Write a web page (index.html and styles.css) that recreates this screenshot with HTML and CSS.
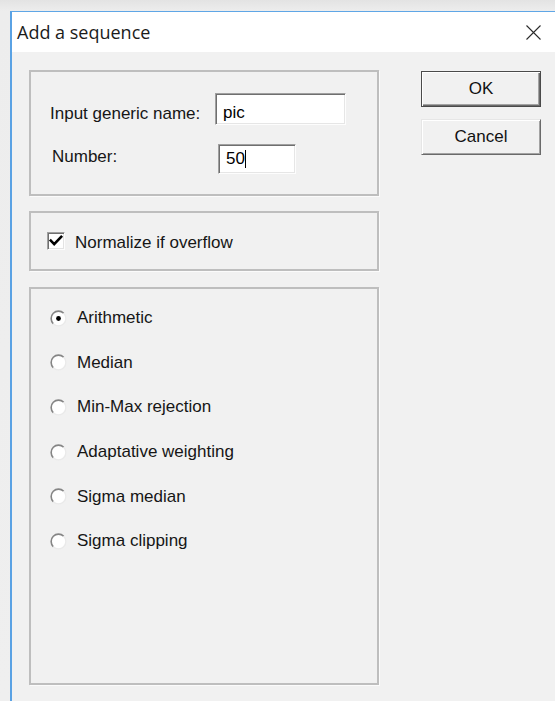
FILE: index.html
```html
<!DOCTYPE html>
<html lang="en">
<head>
<meta charset="utf-8">
<title>Add a sequence</title>
<link rel="stylesheet" href="styles.css">
</head>
<body>
<div class="window">
  <div class="titlebar">
    <span class="title">Add a sequence</span>
    <svg class="close" width="15" height="15" viewBox="0 0 15 15" aria-hidden="true">
      <path d="M0.5 0.5L14.5 14.5M14.5 0.5L0.5 14.5" />
    </svg>
  </div>

  <div class="client">
    <div class="panels">
      <div class="group names">
        <div class="field-row first">
          <span class="label">Input generic name:</span>
          <div class="edit wide">pic</div>
        </div>
        <div class="field-row second">
          <span class="label">Number:</span>
          <div class="edit narrow">50<span class="caret"></span></div>
        </div>
      </div>

      <div class="group options">
        <div class="check-row">
          <span class="checkbox">
            <svg width="18" height="18" viewBox="0 0 18 18" aria-hidden="true">
              <path class="check" d="M3.8 8.6L7.2 12.2L14.2 4.8" />
            </svg>
          </span>
          <span class="check-text">Normalize if overflow</span>
        </div>
      </div>

      <div class="group methods">
        <div class="radio-row">
          <svg class="radio" width="17" height="17" viewBox="0 0 17 17" aria-hidden="true">
            <circle class="radio-face" cx="8.5" cy="8.5" r="7.3" />
            <path class="radio-shade" d="M3.3 13.7A7.3 7.3 0 0 1 13.7 3.3" />
            <path class="radio-light" d="M13.7 3.3A7.3 7.3 0 0 1 3.3 13.7" />
            <circle class="radio-dot" cx="8.5" cy="8.5" r="2.4" />
          </svg>
          <span>Arithmetic</span>
        </div>
        <div class="radio-row">
          <svg class="radio" width="17" height="17" viewBox="0 0 17 17" aria-hidden="true">
            <circle class="radio-face" cx="8.5" cy="8.5" r="7.3" />
            <path class="radio-shade" d="M3.3 13.7A7.3 7.3 0 0 1 13.7 3.3" />
            <path class="radio-light" d="M13.7 3.3A7.3 7.3 0 0 1 3.3 13.7" />
          </svg>
          <span>Median</span>
        </div>
        <div class="radio-row">
          <svg class="radio" width="17" height="17" viewBox="0 0 17 17" aria-hidden="true">
            <circle class="radio-face" cx="8.5" cy="8.5" r="7.3" />
            <path class="radio-shade" d="M3.3 13.7A7.3 7.3 0 0 1 13.7 3.3" />
            <path class="radio-light" d="M13.7 3.3A7.3 7.3 0 0 1 3.3 13.7" />
          </svg>
          <span>Min-Max rejection</span>
        </div>
        <div class="radio-row">
          <svg class="radio" width="17" height="17" viewBox="0 0 17 17" aria-hidden="true">
            <circle class="radio-face" cx="8.5" cy="8.5" r="7.3" />
            <path class="radio-shade" d="M3.3 13.7A7.3 7.3 0 0 1 13.7 3.3" />
            <path class="radio-light" d="M13.7 3.3A7.3 7.3 0 0 1 3.3 13.7" />
          </svg>
          <span>Adaptative weighting</span>
        </div>
        <div class="radio-row">
          <svg class="radio" width="17" height="17" viewBox="0 0 17 17" aria-hidden="true">
            <circle class="radio-face" cx="8.5" cy="8.5" r="7.3" />
            <path class="radio-shade" d="M3.3 13.7A7.3 7.3 0 0 1 13.7 3.3" />
            <path class="radio-light" d="M13.7 3.3A7.3 7.3 0 0 1 3.3 13.7" />
          </svg>
          <span>Sigma median</span>
        </div>
        <div class="radio-row">
          <svg class="radio" width="17" height="17" viewBox="0 0 17 17" aria-hidden="true">
            <circle class="radio-face" cx="8.5" cy="8.5" r="7.3" />
            <path class="radio-shade" d="M3.3 13.7A7.3 7.3 0 0 1 13.7 3.3" />
            <path class="radio-light" d="M13.7 3.3A7.3 7.3 0 0 1 3.3 13.7" />
          </svg>
          <span>Sigma clipping</span>
        </div>
      </div>
    </div>

    <div class="buttons">
      <button class="btn default" type="button">OK</button>
      <button class="btn" type="button">Cancel</button>
    </div>
  </div>
</div>
</body>
</html>
```

FILE: styles.css
```css
html,
body {
  margin: 0;
  height: 100%;
}

body {
  overflow: hidden;
  background: linear-gradient(#e3e3e3 0, #ededed 11px, #efefef 100%);
  font-family: "Liberation Sans", Arial, sans-serif;
  font-size: 17px;
  color: #161616;
}

/* dialog frame */
.window {
  margin: 11px 0 0 10px;
  height: 700px;
  background: #f1f1f1;
  border-top: 1px solid #5fa6e6;
  border-left: 2px solid #5aa2e4;
}

.titlebar {
  height: 40px;
  background: #fff;
  display: flex;
  align-items: center;
  padding-left: 5px;
}

.title {
  font-family: "Open Sans", "Noto Sans", sans-serif;
  font-size: 18px;
  color: #1b1b1b;
  padding-bottom: 1px;
}

.close {
  margin-left: auto;
  margin-right: 14px;
  stroke: #2b2b2b;
  stroke-width: 1.1;
  fill: none;
}

/* client area */
.client {
  display: flex;
  padding: 18px 0 0 17px;
}

.panels {
  width: 350px;
  display: flex;
  flex-direction: column;
}

.group {
  box-sizing: border-box;
  border: 2px solid #bebebe;
  box-shadow: 1px 1px 0 #fbfbfb;
}

/* name / number box */
.names {
  height: 126px;
  padding: 21px 0 0 19px;
}

.field-row {
  display: flex;
  align-items: flex-start;
}

.field-row + .field-row {
  margin-top: 19px;
}

.label {
  width: 165px;
  line-height: 20px;
}

.first .label {
  margin-top: 11px;
}

.second {
  padding-left: 2px;
}

.second .label {
  margin-top: 3px;
}

.second .edit {
  margin-left: 1px;
}

.edit {
  box-sizing: border-box;
  background: #fff;
  color: #000;
  border: 1px solid;
  border-color: #a0a0a0 #fdfdfd #fdfdfd #a0a0a0;
  box-shadow: inset 1px 1px 0 #6f6f6f, inset -1px -1px 0 #e6e6e6;
  padding-left: 7px;
  line-height: 20px;
  white-space: nowrap;
}

.wide {
  width: 131px;
  height: 32px;
  padding-top: 9px;
}

.narrow {
  width: 78px;
  height: 30px;
  padding-top: 4px;
}

.caret {
  display: inline-block;
  width: 1px;
  height: 18px;
  background: #000;
  vertical-align: -4px;
}

/* checkbox box */
.options {
  height: 60px;
  margin-top: 15px;
  padding: 19px 0 0 16px;
}

.check-row {
  display: flex;
  align-items: flex-start;
  gap: 10px;
}

.checkbox {
  box-sizing: border-box;
  width: 18px;
  height: 18px;
  background: #fff;
  border: 1px solid;
  border-color: #a0a0a0 #fdfdfd #fdfdfd #a0a0a0;
  box-shadow: inset 1px 1px 0 #6f6f6f, inset -1px -1px 0 #e3e3e3;
  position: relative;
}

.checkbox svg {
  position: absolute;
  left: -1px;
  top: -1px;
}

.check {
  fill: none;
  stroke: #000;
  stroke-width: 2.6;
  stroke-linecap: square;
  stroke-linejoin: miter;
}

.check-text {
  line-height: 20px;
  margin-top: 1px;
}

/* method radios */
.methods {
  height: 398px;
  margin-top: 16px;
  padding: 19px 0 0 19px;
  display: flex;
  flex-direction: column;
  gap: 24.7px;
}

.radio-row {
  display: flex;
  align-items: center;
  height: 20px;
  gap: 10px;
}

.radio {
  flex: none;
}

.radio-face {
  fill: #fff;
}

.radio-shade {
  fill: none;
  stroke: #858585;
  stroke-width: 1.6;
}

.radio-light {
  fill: none;
  stroke: #eaeaea;
  stroke-width: 1.4;
}

.radio-dot {
  fill: #000;
}

/* push buttons */
.buttons {
  margin-left: 42px;
  margin-top: 1px;
  display: flex;
  flex-direction: column;
  gap: 12px;
}

.btn {
  box-sizing: border-box;
  width: 120px;
  height: 36px;
  padding: 0;
  font-family: "Liberation Sans", Arial, sans-serif;
  font-size: 17px;
  color: #111;
  background: #f1f1f1;
  border: 1px solid;
  border-color: #e6e6e6 #6a6a6a #6a6a6a #e6e6e6;
  box-shadow: inset 1px 1px 0 #fff, inset -1px -1px 0 #a3a3a3;
  border-radius: 0;
}

.btn.default {
  border: 1px solid #4a4a4a;
  box-shadow: inset 1px 1px 0 #fff, inset -1px -1px 0 #6a6a6a, inset -2px -2px 0 #a3a3a3;
}
```
